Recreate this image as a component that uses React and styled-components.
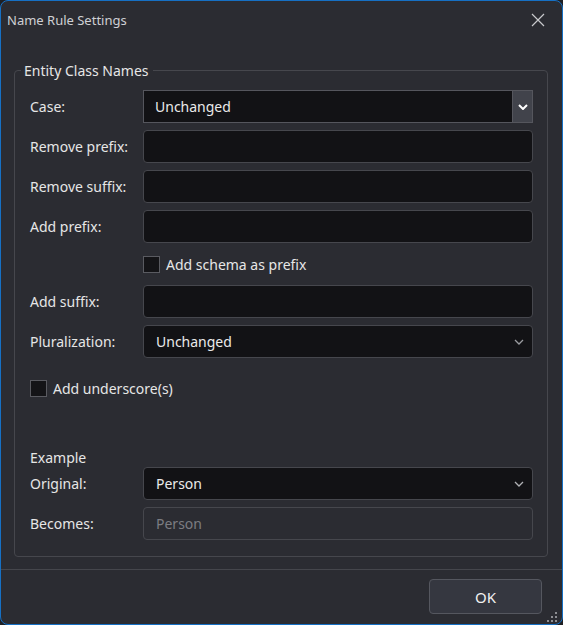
import React from "react";
import styled, { createGlobalStyle } from "styled-components";

const Global = createGlobalStyle`
  html, body { margin: 0; padding: 0; background: #1f2024; }
  body { font-family: "Noto Sans", "Open Sans", sans-serif; }
  * { box-sizing: border-box; }
`;

const Window = styled.div`
  width: 563px;
  height: 625px;
  background: #2b2c32;
  border: 1px solid #1670c4;
  border-radius: 8px;
  display: flex;
  flex-direction: column;
  overflow: hidden;
  position: relative;
  color: #e6e6e6;
  font-size: 14px;
`;

const TitleBar = styled.div`
  height: 38px;
  display: flex;
  align-items: center;
  justify-content: space-between;
  padding: 0 14px 0 6px;
`;

const Title = styled.div`
  color: #cfd0d4;
  font-size: 13px;
  margin-top: -1px;
`;

const CloseBtn = styled.div`
  width: 20px;
  height: 20px;
  display: flex;
  align-items: center;
  justify-content: center;
`;

const Body = styled.div`
  flex: 1;
  padding: 22px 14px 12px 13px;
`;

const Group = styled.fieldset`
  margin: 0;
  border: 1px solid #46474d;
  border-radius: 4px;
  padding: 10px 14px 15px 15px;
  height: 496px;
  display: flex;
  flex-direction: column;
`;

const Legend = styled.legend`
  padding: 0 4px 0 3px;
  margin-left: -9px;
  color: #e6e6e6;
  font-size: 14px;
`;

const Form = styled.div`
  display: grid;
  grid-template-columns: 113px 390px;
  row-gap: 7px;
  align-items: center;
`;

const Label = styled.div`
  color: #e6e6e6;
  font-size: 14px;
`;

const Field = styled.div`
  height: 33px;
  background: ${(p) => (p.$disabled ? "transparent" : "#121215")};
  border: 1px solid ${(p) => (p.$focused ? "#55565d" : "#46474d")};
  border-radius: ${(p) => (p.$focused ? "0" : "4px")};
  display: flex;
  align-items: center;
  padding-left: ${(p) => (p.$focused ? "11px" : "12px")};
  color: ${(p) => (p.$disabled ? "#7c7d82" : "#eaeaea")};
  font-size: 14px;
  position: relative;
`;

const FieldText = styled.span`
  flex: 1;
`;

const DropButton = styled.div`
  width: 20px;
  align-self: stretch;
  background: #41434b;
  border-left: 1px solid #55565d;
  display: flex;
  align-items: center;
  justify-content: center;
`;

const ChevronWrap = styled.div`
  width: 22px;
  display: flex;
  align-items: center;
  justify-content: center;
  margin-right: 2px;
`;

const CheckRow = styled.label`
  display: flex;
  align-items: center;
  gap: 6px;
  height: ${(p) => p.$h || 27}px;
  color: #e6e6e6;
  font-size: 14px;
`;

const Box = styled.span`
  width: 17px;
  height: 17px;
  background: #141417;
  border: 1px solid #5a5b61;
  display: inline-block;
`;

const Spacer = styled.div`
  height: ${(p) => p.$h}px;
  flex: none;
`;

const SectionLabel = styled.div`
  color: #e6e6e6;
  font-size: 14px;
  height: 20px;
  display: flex;
  align-items: center;
`;

const Footer = styled.div`
  height: 55px;
  border-top: 1px solid #45464c;
  display: flex;
  justify-content: flex-end;
  align-items: flex-start;
  padding: 9px 20px 0 0;
`;

const OkButton = styled.button`
  width: 113px;
  height: 35px;
  background: #353740;
  border: 1px solid #55575f;
  border-radius: 4px;
  color: #f0f0f0;
  font-family: inherit;
  font-size: 15px;
`;

const Grip = styled.div`
  position: absolute;
  right: 3px;
  bottom: 3px;
  width: 12px;
  height: 12px;
`;

const Chevron = ({ color = "#9a9ba0", bold }) => (
  <svg width="10" height="6" viewBox="0 0 10 6">
    <path
      d="M1 1 L5 5 L9 1"
      fill="none"
      stroke={color}
      strokeWidth={bold ? 2 : 1.3}
    />
  </svg>
);

export default function App() {
  return (
    <>
      <Global />
      <Window>
        <TitleBar>
          <Title>Name Rule Settings</Title>
          <CloseBtn>
            <svg width="14" height="14" viewBox="0 0 14 14">
              <path d="M1 1 L13 13 M13 1 L1 13" stroke="#c8c9cc" strokeWidth="1.2" />
            </svg>
          </CloseBtn>
        </TitleBar>
        <Body>
          <Group>
            <Legend>Entity Class Names</Legend>
            <Form>
              <Label>Case:</Label>
              <Field $focused>
                <FieldText>Unchanged</FieldText>
                <DropButton>
                  <Chevron color="#ffffff" bold />
                </DropButton>
              </Field>
              <Label>Remove prefix:</Label>
              <Field />
              <Label>Remove suffix:</Label>
              <Field />
              <Label>Add prefix:</Label>
              <Field />
              <div />
              <CheckRow $h={28}>
                <Box />
                Add schema as prefix
              </CheckRow>
              <Label>Add suffix:</Label>
              <Field />
              <Label>Pluralization:</Label>
              <Field>
                <FieldText>Unchanged</FieldText>
                <ChevronWrap>
                  <Chevron />
                </ChevronWrap>
              </Field>
            </Form>
            <Spacer $h={17} />
            <CheckRow>
              <Box />
              Add underscore(s)
            </CheckRow>
            <Spacer $h={45} />
            <SectionLabel>Example</SectionLabel>
            <Form>
              <Label>Original:</Label>
              <Field>
                <FieldText>Person</FieldText>
                <ChevronWrap>
                  <Chevron color="#b0b1b5" />
                </ChevronWrap>
              </Field>
              <Label>Becomes:</Label>
              <Field $disabled>
                <FieldText>Person</FieldText>
              </Field>
            </Form>
          </Group>
        </Body>
        <Footer>
          <OkButton>OK</OkButton>
        </Footer>
        <Grip>
          <svg width="12" height="12" viewBox="0 0 12 12" fill="#8d8e93">
            <rect x="8" y="0" width="2" height="2" />
            <rect x="4" y="4" width="2" height="2" />
            <rect x="8" y="4" width="2" height="2" />
            <rect x="0" y="8" width="2" height="2" />
            <rect x="4" y="8" width="2" height="2" />
            <rect x="8" y="8" width="2" height="2" />
          </svg>
        </Grip>
      </Window>
    </>
  );
}
